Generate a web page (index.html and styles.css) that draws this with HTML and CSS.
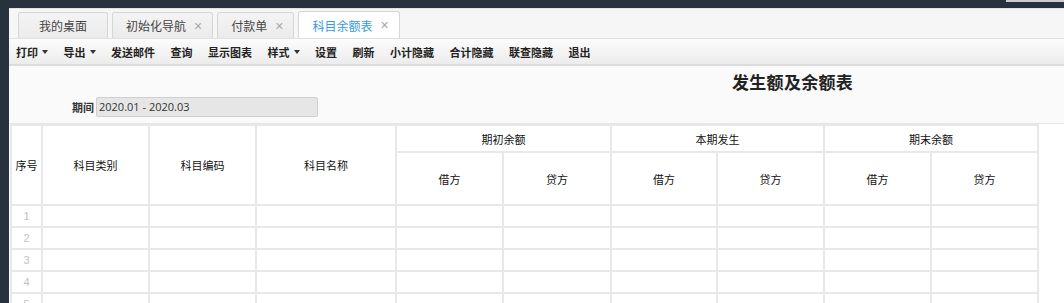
FILE: index.html
```html
<!DOCTYPE html>
<html lang="zh-CN">
<head>
  <meta charset="UTF-8">
  <title>发生额及余额表</title>
  <link rel="stylesheet" href="styles.css">
</head>
<body>

  <div class="topbar"><span class="topbar-knob"></span></div>

  <div class="app">
    <div class="tabs">
      <div class="tab">我的桌面</div>
      <div class="tab">初始化导航 <span class="tab-close">×</span></div>
      <div class="tab">付款单 <span class="tab-close">×</span></div>
      <div class="tab active">科目余额表 <span class="tab-close">×</span></div>
    </div>

    <div class="toolbar">
      <span class="tool">打印 <i class="caret"></i></span>
      <span class="tool">导出 <i class="caret"></i></span>
      <span class="tool">发送邮件</span>
      <span class="tool">查询</span>
      <span class="tool">显示图表</span>
      <span class="tool">样式 <i class="caret"></i></span>
      <span class="tool">设置</span>
      <span class="tool">刷新</span>
      <span class="tool">小计隐藏</span>
      <span class="tool">合计隐藏</span>
      <span class="tool">联查隐藏</span>
      <span class="tool">退出</span>
    </div>

    <div class="report-head">
      <div class="report-title">发生额及余额表</div>
      <div class="period">
        <label>期间</label>
        <div class="period-input">2020.01 - 2020.03</div>
      </div>
    </div>

    <table class="grid">
      <colgroup>
        <col style="width:31px"><col style="width:107px"><col style="width:107px"><col style="width:140px">
        <col style="width:107px"><col style="width:108px"><col style="width:106px"><col style="width:107px">
        <col style="width:107px"><col style="width:107px">
      </colgroup>
      <thead>
        <tr class="h1">
          <th rowspan="2">序号</th>
          <th rowspan="2">科目类别</th>
          <th rowspan="2">科目编码</th>
          <th rowspan="2">科目名称</th>
          <th colspan="2">期初余额</th>
          <th colspan="2">本期发生</th>
          <th colspan="2">期末余额</th>
        </tr>
        <tr class="h2">
          <th>借方</th><th>贷方</th>
          <th>借方</th><th>贷方</th>
          <th>借方</th><th>贷方</th>
        </tr>
      </thead>
      <tbody>
        <tr><td class="num">1</td><td></td><td></td><td></td><td></td><td></td><td></td><td></td><td></td><td></td></tr>
        <tr><td class="num">2</td><td></td><td></td><td></td><td></td><td></td><td></td><td></td><td></td><td></td></tr>
        <tr><td class="num">3</td><td></td><td></td><td></td><td></td><td></td><td></td><td></td><td></td><td></td></tr>
        <tr><td class="num">4</td><td></td><td></td><td></td><td></td><td></td><td></td><td></td><td></td><td></td></tr>
        <tr><td class="num">5</td><td></td><td></td><td></td><td></td><td></td><td></td><td></td><td></td><td></td></tr>
      </tbody>
    </table>
  </div>

</body>
</html>
```

FILE: styles.css
```css
body {
  margin: 0;
  background: #28323f;
  font-family: "Noto Sans CJK SC", "Liberation Sans", sans-serif;
  color: #333;
  height: 303px;
  overflow: hidden;
}

.topbar {
  height: 8px;
  display: flex;
  justify-content: flex-end;
}

.topbar-knob {
  width: 58px;
  height: 2px;
  background: #c9ccd0;
}

.app {
  margin-left: 9px;
  background: #fff;
  height: 295px;
}

.tabs {
  height: 30px;
  background: #f6f6f6;
  border-top: 1px solid #e2e2e2;
  box-sizing: border-box;
  padding-left: 9px;
  display: flex;
  align-items: flex-end;
  gap: 4px;
}

.tab {
  height: 26px;
  box-sizing: border-box;
  border: 1px solid #d6d6d6;
  border-bottom: none;
  border-radius: 3px 3px 0 0;
  background: linear-gradient(#f4f4f4, #ebebeb);
  font-size: 12px;
  color: #444;
  display: flex;
  align-items: center;
  padding: 0 10px 0 13px;
}

.tab:first-child {
  width: 90px;
  justify-content: center;
  padding: 0;
}

.tab.active {
  background: #fff;
  color: #3a9ae0;
  height: 27px;
}

.tab-close {
  color: #a8a8a8;
  font-size: 14px;
  margin-left: 8px;
  font-family: "Liberation Sans", sans-serif;
}

.toolbar {
  height: 25px;
  background: linear-gradient(#fcfcfc, #ececec);
  border-top: 1px solid #e0e0e0;
  border-bottom: 2px solid #dcdcdc;
  display: flex;
  align-items: center;
  padding-left: 7px;
  gap: 15.5px;
  font-size: 11px;
  font-weight: bold;
  color: #222;
}

.tool {
  display: flex;
  align-items: center;
}

.caret {
  display: inline-block;
  margin-left: 4px;
  border-left: 3px solid transparent;
  border-right: 3px solid transparent;
  border-top: 4px solid #333;
}

.report-head {
  height: 57px;
  background: #fafafa;
  border-bottom: 1px solid #e6e6e6;
}

.report-title {
  padding: 3px 0 0 723px;
  font-size: 17px;
  font-weight: bold;
  color: #222;
  letter-spacing: 0.3px;
}

.period {
  display: flex;
  align-items: center;
  padding: 3px 0 0 63px;
}

.period label {
  font-size: 11px;
  font-weight: bold;
  margin-right: 2px;
}

.period-input {
  width: 222px;
  height: 20px;
  box-sizing: border-box;
  background: #e6e6e6;
  border: 1px solid #cfcfcf;
  border-radius: 2px;
  font-size: 11px;
  line-height: 18px;
  padding-left: 2px;
  color: #333;
  font-family: "Open Sans", "Liberation Sans", sans-serif;
}

.grid {
  margin-left: 1px;
  border-collapse: collapse;
  table-layout: fixed;
  width: 1027px;
  font-size: 11px;
}

.grid th,
.grid td {
  border: 2px solid #e8e8e8;
  padding: 0;
  text-align: center;
}

.grid th {
  font-weight: normal;
  color: #111;
}

.grid .h1 th {
  height: 25px;
}

.grid .h2 th {
  height: 51px;
}

.grid td {
  height: 20px;
}

.grid .num {
  color: #c2c2c2;
  font-family: "Liberation Sans", sans-serif;
}
```
